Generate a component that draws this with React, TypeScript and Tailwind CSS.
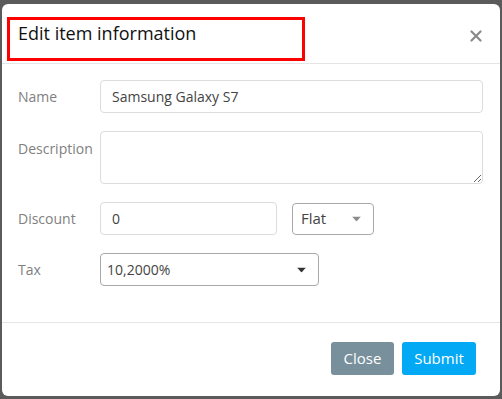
import React from 'react';

const Caret: React.FC<{ color: string }> = ({ color }) => (
  <svg width="9" height="5" viewBox="0 0 9 5" className="absolute right-[12px] top-1/2 -translate-y-1/2">
    <path d="M0 0 L9 0 L4.5 5 Z" fill={color} />
  </svg>
);

const App: React.FC = () => {
  const labelCls = 'w-[82px] shrink-0 text-[14px] text-[#808080]';
  const inputCls =
    'h-[33px] rounded-[4px] border border-[#dcdcdc] bg-white px-[11px] text-[14px] text-[#444] outline-none';

  return (
    <div
      className="w-[502px] h-[399px] bg-[#5b5b5b] pt-[4px] pl-[2px] overflow-hidden"
      style={{ fontFamily: '"Open Sans", "Liberation Sans", sans-serif' }}
    >
      <div className="w-[498px] h-[392px] bg-white rounded-[6px] flex flex-col">
        {/* header */}
        <div className="flex items-start justify-between pl-[5px] pr-[16px] pt-[13px] pb-[2px] border-b border-[#e5e5e5]">
          <div className="w-[298px] h-[44px] border-[3px] border-[#ff0000] pl-[8px]">
            <h4 className="text-[18px] text-[#111] leading-[26px]">Edit item information</h4>
          </div>
          <button className="mt-[11px] p-[2px] text-[#8a8a8a]">
            <svg width="12" height="12" viewBox="0 0 12 12">
              <path d="M1.5 1.5 L10.5 10.5 M10.5 1.5 L1.5 10.5" stroke="currentColor" strokeWidth="2.2" strokeLinecap="round" />
            </svg>
          </button>
        </div>

        {/* body */}
        <div className="flex-1 flex flex-col gap-[18px] pl-[16px] pr-[17px] pt-[16px]">
          <div className="flex items-center">
            <label className={labelCls}>Name</label>
            <input className={inputCls + ' flex-1'} defaultValue="Samsung Galaxy S7" />
          </div>
          <div className="flex items-start">
            <label className={labelCls + ' pt-[7px]'}>Description</label>
            <textarea className="flex-1 h-[53px] rounded-[4px] border border-[#dcdcdc] bg-white px-[11px] py-[6px] text-[14px] text-[#444] outline-none" />
          </div>
          <div className="flex items-center">
            <label className={labelCls}>Discount</label>
            <input className={inputCls + ' w-[177px]'} defaultValue="0" />
            <div className="relative ml-[15px] w-[82px] h-[32px] rounded-[4px] border border-[#a9a9a9] px-[8px] flex items-center text-[15px] text-[#444]">
              Flat
              <Caret color="#8c8c8c" />
            </div>
          </div>
          <div className="flex items-center">
            <label className={labelCls}>Tax</label>
            <div className="relative w-[219px] h-[33px] rounded-[4px] border border-[#a9a9a9] px-[6px] flex items-center text-[14px] text-[#444]">
              10,2000%
              <Caret color="#333" />
            </div>
          </div>
        </div>

        {/* footer */}
        <div className="border-t border-[#e5e5e5] flex justify-end gap-[8px] pt-[19px] pb-[21px] pr-[24px]">
          <button className="w-[63px] h-[33px] rounded-[3px] bg-[#78909c] text-white text-[15px]">Close</button>
          <button className="w-[74px] h-[33px] rounded-[3px] bg-[#03a9f4] text-white text-[15px]">Submit</button>
        </div>
      </div>
    </div>
  );
};

export default App;
